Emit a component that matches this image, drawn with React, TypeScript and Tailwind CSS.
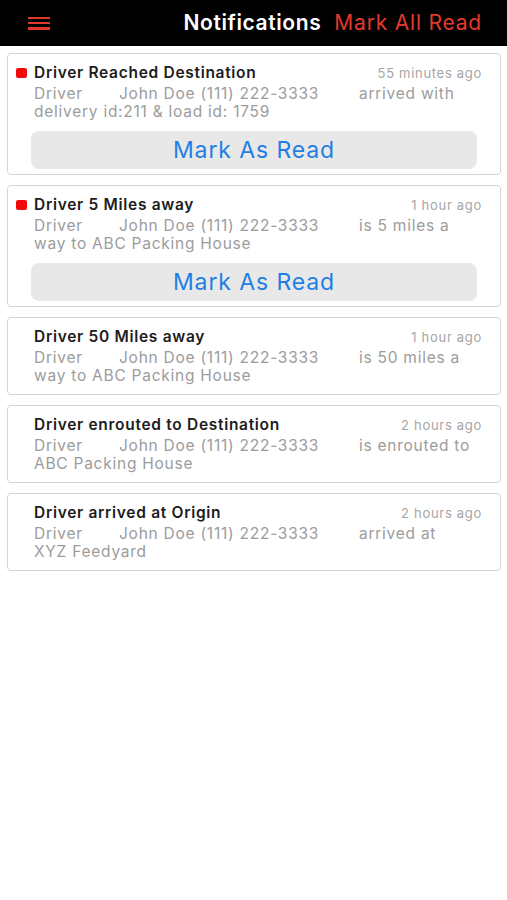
import React from 'react';

type Notice = {
  title: string;
  time: string;
  tail: string;
  second: string;
  unread: boolean;
};

const notices: Notice[] = [
  { title: 'Driver Reached Destination', time: '55 minutes ago', tail: 'arrived with', second: 'delivery id:211 & load id: 1759', unread: true },
  { title: 'Driver 5 Miles away', time: '1 hour ago', tail: 'is 5 miles a', second: 'way to ABC Packing House', unread: true },
  { title: 'Driver 50 Miles away', time: '1 hour ago', tail: 'is 50 miles a', second: 'way to ABC Packing House', unread: false },
  { title: 'Driver enrouted to Destination', time: '2 hours ago', tail: 'is enrouted to', second: 'ABC Packing House', unread: false },
  { title: 'Driver arrived at Origin', time: '2 hours ago', tail: 'arrived at', second: 'XYZ Feedyard', unread: false },
];

const NoticeCard = ({ n }: { n: Notice }) => (
  <div className="mx-[7px] mr-[6px] rounded-[4px] border border-[#d4d4d4] bg-white pt-[9px] pb-[5px]">
    <div className="flex items-center pl-[8px] pr-[18px]">
      <div className="w-[11px] shrink-0">
        {n.unread && <div className="h-[10px] w-[11px] rounded-[2px] bg-[#f00a0a]" />}
      </div>
      <div className="ml-[7px] flex flex-1 items-baseline justify-between">
        <span className="text-[15.5px] leading-[20px] font-semibold tracking-[0.7px] text-[#1c1c1c]">{n.title}</span>
        <span className="text-[13px] leading-[20px] tracking-[0.7px] text-[#a6a6a6]">{n.time}</span>
      </div>
    </div>
    <div className="mt-[2px] pl-[26px] text-[15.5px] leading-[18px] tracking-[0.75px] text-[#9c9c9c]">
      <div className="whitespace-nowrap">
        <span className="inline-block w-[85px]">Driver</span>
        <span className="inline-block w-[240px]">John Doe (111) 222-3333</span>
        <span>{n.tail}</span>
      </div>
      <div className="whitespace-nowrap">{n.second}</div>
    </div>
    {n.unread ? (
      <button className="mx-[23px] mt-[10px] flex h-[38px] w-[446px] items-center justify-center rounded-[8px] bg-[#e8e8e8] text-[23px] tracking-[0.9px] text-[#1f7fe4]">
        Mark As Read
      </button>
    ) : (
      <div className="h-[4px]" />
    )}
  </div>
);

export default function App() {
  return (
    <div className="min-h-[900px] w-full bg-white" style={{ fontFamily: 'Inter, "Liberation Sans", sans-serif' }}>
      <div className="flex h-[46px] items-center bg-black pl-[28px] pr-[25px]">
        <div className="flex h-[13px] w-[22px] flex-col justify-between">
          <div className="h-[2.5px] bg-[#e0382b]" />
          <div className="h-[2.5px] bg-[#e0382b]" />
          <div className="h-[2.5px] bg-[#e0382b]" />
        </div>
        <div className="ml-auto flex items-center gap-[13px]">
          <span className="text-[21px] font-semibold tracking-[0.6px] text-white">Notifications</span>
          <span className="text-[21px] tracking-[0.8px] text-[#e4392c]">Mark All Read</span>
        </div>
      </div>
      <div className="mt-[7px] flex flex-col gap-[10px]">
        {notices.map(n => (
          <NoticeCard key={n.title} n={n} />
        ))}
      </div>
    </div>
  );
}
